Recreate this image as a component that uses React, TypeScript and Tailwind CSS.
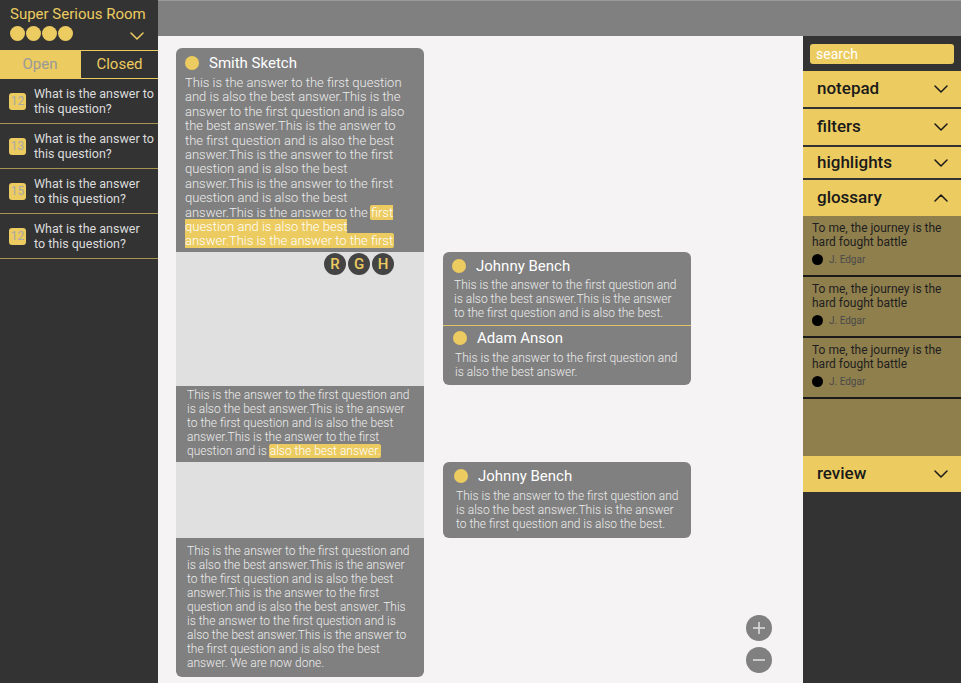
import { Fragment } from 'react';

const FONT = { fontFamily: 'Roboto, "Noto Sans", sans-serif' };

const QUESTIONS = [
  { n: 12, text: 'What is the answer to this question?' },
  { n: 13, text: 'What is the answer to this question?' },
  { n: 15, text: 'What is the answer to this question?', narrow: true },
  { n: 12, text: 'What is the answer to this question?', narrow: true },
];

const ANSWER = 'This is the answer to the first question and is also the best answer.';

function Chevron({ up = false, className = '' }: { up?: boolean; className?: string }) {
  return (
    <svg width="14" height="8" viewBox="0 0 14 8" className={className} fill="none">
      <polyline
        points={up ? '1,7 7,1 13,7' : '1,1 7,7 13,1'}
        stroke="currentColor"
        strokeWidth="1.5"
        strokeLinecap="round"
        strokeLinejoin="round"
      />
    </svg>
  );
}

function Dot() {
  return <span className="inline-block w-[14px] h-[14px] rounded-full bg-[#ECCB60] shrink-0" />;
}

function Hl({ children }: { children: React.ReactNode }) {
  return <span className="bg-[#ECCB60] text-white rounded-[2px] px-[1px] -mx-[1px]">{children}</span>;
}

function Sidebar() {
  return (
    <aside className="w-[158px] shrink-0 bg-[#333333] flex flex-col">
      <div className="h-[50px] px-[10px] pt-[5px] relative">
        <div className="text-[15px] text-[#ECCB60] leading-[18px]">Super Serious Room</div>
        <div className="flex gap-[1px] mt-[3px]">
          {[0, 1, 2, 3].map((i) => (
            <span key={i} className="w-[15px] h-[15px] rounded-full bg-[#ECCB60]" />
          ))}
        </div>
        <Chevron className="absolute right-[14px] top-[32px] text-[#ECCB60]" />
      </div>
      <div className="flex h-[29px] border-t border-b border-[#ECCB60]">
        <div className="w-[80px] bg-[#ECCB60] text-[#9a9a9a] text-[15px] flex items-center justify-center">Open</div>
        <div className="flex-1 border-l border-[#ECCB60] text-[#ECCB60] text-[15px] flex items-center justify-center">Closed</div>
      </div>
      {QUESTIONS.map((q, i) => (
        <div key={i} className="h-[45px] border-b border-[#a89350] flex items-center pl-[9px] gap-[8px]">
          <span className="w-[17px] h-[17px] rounded-[3px] bg-[#ECCB60] text-[#a8a8a8] text-[12px] flex items-center justify-center shrink-0">
            {q.n}
          </span>
          <span className={`text-[12.5px] leading-[15px] text-[#dcdcdc] ${q.narrow ? 'pr-[18px]' : ''}`}>{q.text}</span>
        </div>
      ))}
    </aside>
  );
}

function PersonHead({ name }: { name: string }) {
  return (
    <div className="flex items-center gap-[10px] h-[14px]">
      <Dot />
      <span className="text-[15px] text-white">{name}</span>
    </div>
  );
}

function LeftColumn() {
  return (
    <div className="w-[248px] flex flex-col">
      <div className="bg-[#808080] rounded-t-[6px] h-[204px] overflow-hidden px-[9px] pt-[8px]">
        <PersonHead name="Smith Sketch" />
        <div className="mt-[6px] h-[173px] overflow-hidden">
          <p className="text-[13px] leading-[14.4px] font-light text-[#ececec]">
            {ANSWER}
            {ANSWER}
            {ANSWER}
            {ANSWER}
            {ANSWER.slice(0, -1)}.This is the answer to the <Hl>first question and is also the best answer.This is the answer to the first</Hl>{' '}
            question and is also the best answer.
          </p>
        </div>
      </div>
      <div className="bg-[#E0E0E0] h-[134px] flex justify-end items-start gap-[2px] pr-[30px] pt-[1px]">
        {['R', 'G', 'H'].map((l) => (
          <span key={l} className="w-[22px] h-[22px] rounded-full bg-[#444444] text-[#ECCB60] text-[15px] font-medium flex items-center justify-center">
            {l}
          </span>
        ))}
      </div>
      <div className="bg-[#808080] h-[76px] pl-[11px] pr-[9px] pt-[2px]">
        <p className="text-[12px] leading-[14px] font-light text-[#ececec]">
          {ANSWER}
          {ANSWER}
          This is the answer to the first question and is <Hl>also the best answer.</Hl>
        </p>
      </div>
      <div className="bg-[#E0E0E0] h-[76px]" />
      <div className="bg-[#808080] rounded-b-[6px] h-[139px] pl-[11px] pr-[9px] pt-[6px]">
        <p className="text-[12px] leading-[14px] font-light text-[#ececec]">
          {ANSWER}
          {ANSWER}
          {ANSWER} {ANSWER}
          {ANSWER} We are now done.
        </p>
      </div>
    </div>
  );
}

function RightColumn() {
  return (
    <div className="w-[248px] flex flex-col pt-[204px]">
      <div className="bg-[#808080] rounded-[6px] h-[133px] pt-[7px]">
        <div className="px-[9px]">
          <PersonHead name="Johnny Bench" />
        </div>
        <p className="pl-[11px] pr-[8px] mt-[5px] text-[12px] leading-[14px] font-light text-[#ececec] h-[47px]">
          {ANSWER}This is the answer to the first question and is also the best.
        </p>
        <div className="h-px bg-[#e0c46a]" />
        <div className="px-[10px] pt-[5px]">
          <PersonHead name="Adam Anson" />
        </div>
        <p className="pl-[12px] pr-[8px] mt-[6px] text-[12px] leading-[14px] font-light text-[#ececec]">{ANSWER}</p>
      </div>
      <div className="bg-[#808080] rounded-[6px] h-[76px] mt-[77px] pt-[7px]">
        <div className="px-[11px]">
          <PersonHead name="Johnny Bench" />
        </div>
        <p className="pl-[13px] pr-[8px] mt-[6px] text-[12px] leading-[14px] font-light text-[#ececec]">
          {ANSWER}This is the answer to the first question and is also the best.
        </p>
      </div>
    </div>
  );
}

function ZoomButton({ minus = false }: { minus?: boolean }) {
  return (
    <span className="w-[26px] h-[26px] rounded-full bg-[#808080] flex items-center justify-center">
      <svg width="16" height="16" viewBox="0 0 16 16">
        <line x1="2" y1="8" x2="14" y2="8" stroke="#dddddd" strokeWidth="1.6" />
        {!minus && <line x1="8" y1="2" x2="8" y2="14" stroke="#dddddd" strokeWidth="1.6" />}
      </svg>
    </span>
  );
}

const SECTIONS = [
  { label: 'notepad', h: 'h-[36px]' },
  { label: 'filters', h: 'h-[36px]' },
  { label: 'highlights', h: 'h-[31px]' },
];

function SectionHead({ label, h, up = false }: { label: string; h: string; up?: boolean }) {
  return (
    <div className={`${h} bg-[#ECCB60] flex items-center justify-between pl-[14px] pr-[13px]`}>
      <span className="text-[17px] font-medium text-[#1a1a1a]">{label}</span>
      <Chevron up={up} className="text-[#1a1a1a]" />
    </div>
  );
}

function RightPanel() {
  return (
    <aside className="w-[158px] shrink-0 bg-[#333333] flex flex-col">
      <div className="h-[35px] px-[7px] pt-[8px]">
        <div className="h-[20px] bg-[#ECCB60] rounded-[3px] text-white text-[14px] leading-[20px] pl-[6px]">search</div>
      </div>
      <div className="flex flex-col gap-[2px]">
        {SECTIONS.map((s) => (
          <SectionHead key={s.label} label={s.label} h={s.h} />
        ))}
        <div className="flex flex-col">
          <SectionHead label="glossary" h="h-[36px]" up />
          <div className="bg-[#8F7F4D] h-[240px] flex flex-col">
            {[0, 1, 2].map((i) => (
              <Fragment key={i}>
                <div className="h-[61px] pl-[9px] pr-[8px] pt-[5px] border-b-2 border-[#1a1a1a]">
                  <div className="text-[12px] leading-[14px] text-[#1e1e1e]">To me, the journey is the hard fought battle</div>
                  <div className="flex items-center gap-[6px] mt-[3px]">
                    <span className="w-[11px] h-[11px] rounded-full bg-black" />
                    <span className="text-[10px] text-[#4a4a4a]">J. Edgar</span>
                  </div>
                </div>
              </Fragment>
            ))}
          </div>
          <SectionHead label="review" h="h-[36px]" />
        </div>
      </div>
    </aside>
  );
}

export default function App() {
  return (
    <div className="w-[961px] h-[683px] flex overflow-hidden" style={FONT}>
      <Sidebar />
      <div className="flex-1 flex flex-col">
        <div className="h-[36px] bg-[#808080] border-t border-[#9a9a9a] shrink-0" />
        <div className="flex-1 flex min-h-0">
          <main className="flex-1 bg-[#F5F3F4] relative pl-[18px] pt-[12px] flex gap-[19px] items-start">
            <LeftColumn />
            <RightColumn />
            <div className="absolute right-[31px] bottom-[10px] flex flex-col gap-[6px]">
              <ZoomButton />
              <ZoomButton minus />
            </div>
          </main>
          <RightPanel />
        </div>
      </div>
    </div>
  );
}
